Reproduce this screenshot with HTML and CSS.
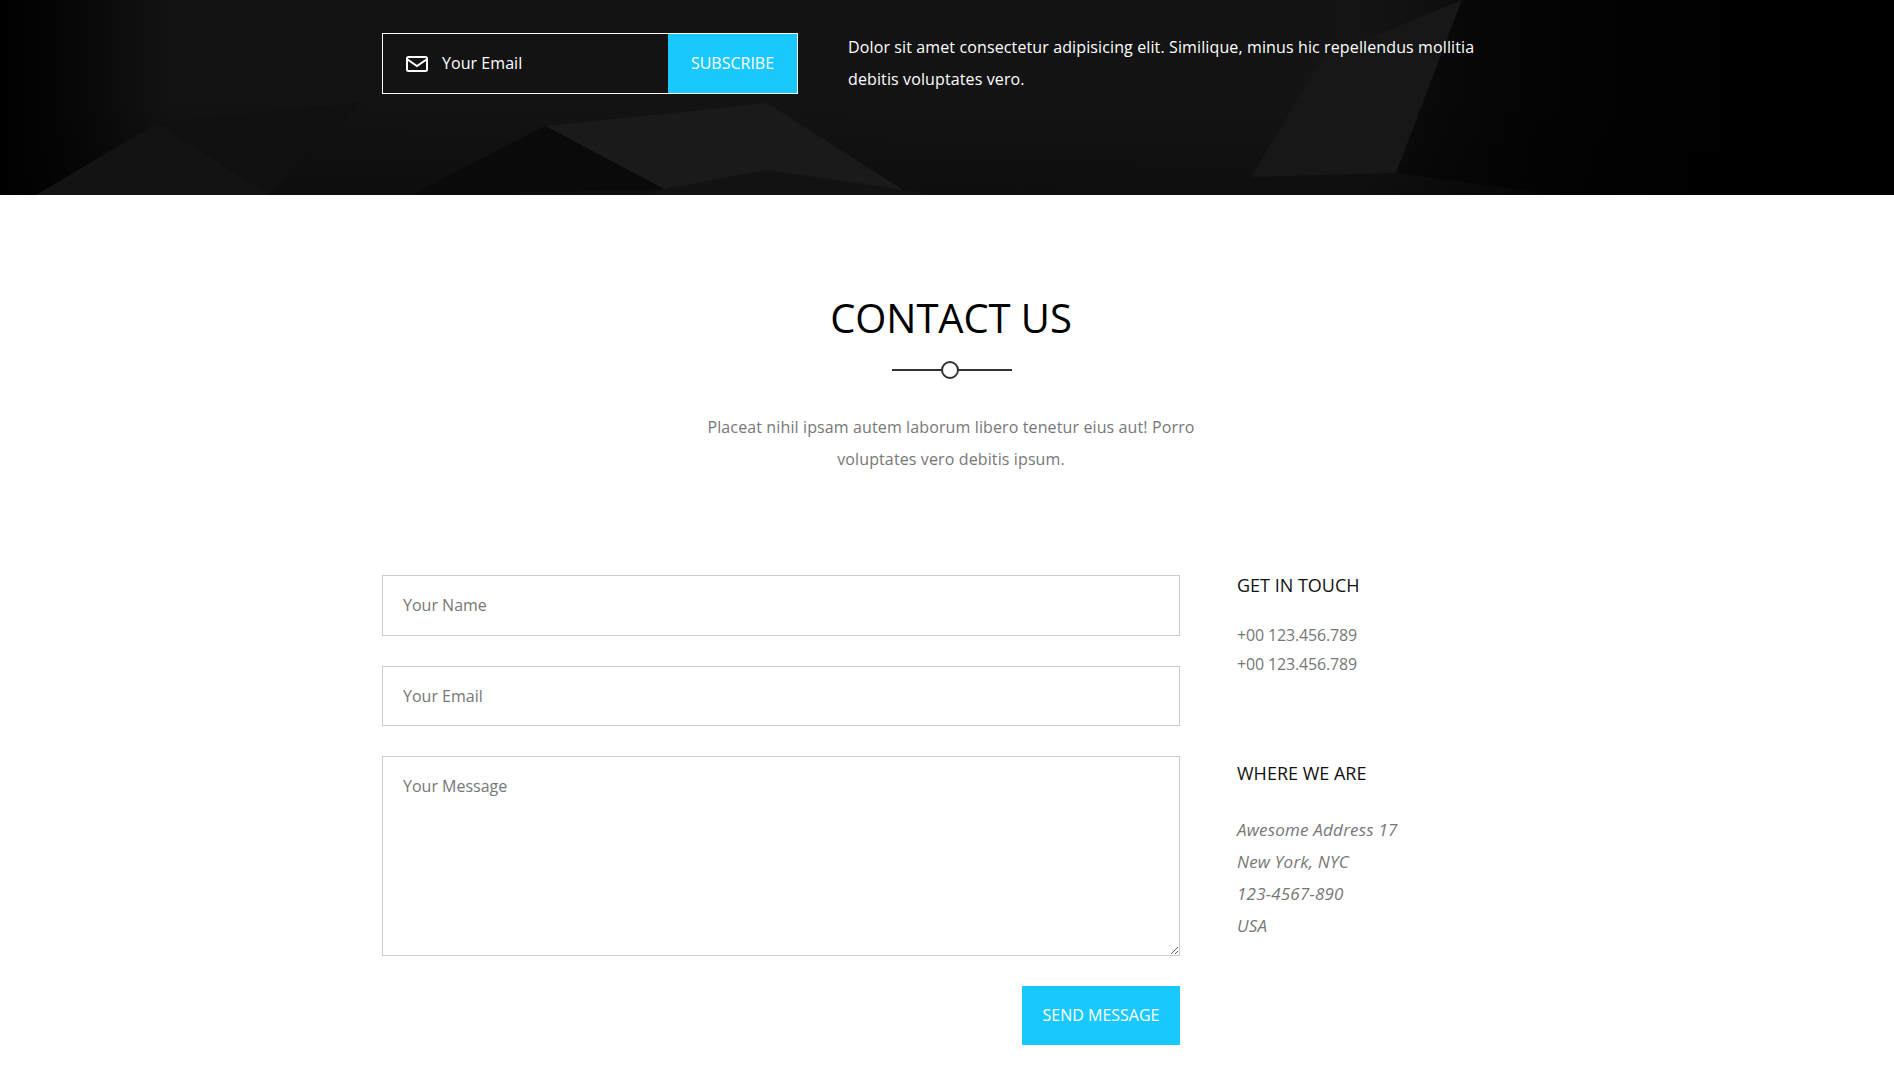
FILE: index.html
```html
<!doctype html>
<html lang="en">
<head>
<meta charset="utf-8">
<meta name="viewport" content="width=device-width,initial-scale=1">
<title>Contact</title>
<link rel="stylesheet" href="styles.css">
</head>
<body>
<section class="newsletter">
  <svg class="newsletter-bg" viewBox="0 0 1894 195" preserveAspectRatio="none" aria-hidden="true">
    <defs>
      <linearGradient id="bgFade" x1="0" x2="1" y1="0" y2="0">
        <stop offset="0" stop-color="#000"/>
        <stop offset=".04" stop-color="#070707"/>
        <stop offset=".09" stop-color="#131313"/>
        <stop offset=".72" stop-color="#141414"/>
        <stop offset=".8" stop-color="#0a0a0a"/>
        <stop offset=".9" stop-color="#030303"/>
        <stop offset=".97" stop-color="#000"/>
      </linearGradient>
      <linearGradient id="bgDown" x1="0" x2="0" y1="0" y2="1">
        <stop offset="0" stop-color="#000" stop-opacity="0"/>
        <stop offset=".5" stop-color="#000" stop-opacity="0"/>
        <stop offset="1" stop-color="#000" stop-opacity=".3"/>
      </linearGradient>
      <linearGradient id="bgRight" x1="0" x2="1" y1="0" y2="0">
        <stop offset="0" stop-color="#000" stop-opacity=".35"/>
        <stop offset=".5" stop-color="#000" stop-opacity=".75"/>
        <stop offset="1" stop-color="#000"/>
      </linearGradient>
    </defs>
    <rect width="1894" height="195" fill="url(#bgFade)"/>
    <rect width="1894" height="195" fill="url(#bgDown)"/>
    <polygon points="36,195 157,123 270,195" fill="#131313"/>
    <polygon points="157,123 364,102 270,195" fill="#101010"/>
    <polygon points="545,126 767,103 903,190 664,189" fill="#1a1a1a"/>
    <polygon points="545,126 412,195 664,189" fill="#0a0a0a"/>
    <polygon points="664,189 767,170 903,190 940,195 640,195" fill="#121212"/>
    <polygon points="1462,0 1396,173 1251,177 1323,57" fill="#171717"/>
    <polygon points="1462,0 1894,0 1894,195 1560,195 1396,173" fill="url(#bgRight)"/>
  </svg>
  <div class="wrap newsletter-row">
    <form class="subscribe">
      <svg class="mail-icon" viewBox="0 0 22 16" aria-hidden="true">
        <rect x="1" y="1" width="20" height="14" rx="1.500"/>
        <path d="M1.500 3.500 11 10l9.500-6.500"/>
      </svg>
      <span class="subscribe-label">Your Email</span>
      <button type="button" class="subscribe-btn">SUBSCRIBE</button>
    </form>
    <p class="newsletter-text">Dolor sit amet consectetur adipisicing elit. Similique, minus hic repellendus mollitia debitis voluptates vero.</p>
  </div>
</section>

<section class="contact">
  <div class="contact-head">
    <h2>CONTACT US</h2>
    <div class="divider"><span></span></div>
    <p>Placeat nihil ipsam autem laborum libero tenetur eius aut! Porro voluptates vero debitis ipsum.</p>
  </div>
  <div class="wrap contact-row">
    <form class="contact-form">
      <input type="text" placeholder="Your Name">
      <input type="text" placeholder="Your Email">
      <textarea placeholder="Your Message"></textarea>
      <button type="button" class="send-btn">SEND MESSAGE</button>
    </form>
    <aside class="contact-info">
      <h4>GET IN TOUCH</h4>
      <div class="phones">
        <div>+00 123.456.789</div>
        <div>+00 123.456.789</div>
      </div>
      <h4 class="where">WHERE WE ARE</h4>
      <address>
        Awesome Address 17<br>
        New York, NYC<br>
        123-4567-890<br>
        USA
      </address>
    </aside>
  </div>
</section>
</body>
</html>
```

FILE: styles.css
```css
:root{--cyan:#19c8ff;--grey:#777;--line:#ccc}
*{box-sizing:border-box}
body{margin:0;background:#fff;color:#000;font-family:"Open Sans",sans-serif;font-size:16px}
.wrap{width:1130px;margin-left:382px}

.newsletter{position:relative;height:195px;padding-top:33px;background:#0c0c0c;overflow:hidden}
.newsletter-bg{position:absolute;left:0;top:0;width:100%;height:100%}
.newsletter-row{position:relative;display:flex;align-items:flex-start}
.subscribe{display:flex;align-items:center;width:416px;height:61px;border:1px solid #fff;padding-left:23px;color:#fff}
.mail-icon{width:22px;height:16px;fill:none;stroke:#fff;stroke-width:2;margin-right:14px}
.subscribe-label{flex:1;padding-bottom:2px;letter-spacing:.05px}
.subscribe-btn{width:129px;height:59px;border:0;padding:0 0 2px;background:var(--cyan);color:#fff;font:inherit}
.newsletter-text{width:650px;margin:-2px 0 0 50px;color:#fff;line-height:32px;letter-spacing:.12px}

.contact{padding-top:98px}
.contact-head{width:520px;margin:0 auto;padding-left:8px;text-align:center}
.contact-head h2{margin:0;font-size:40px;font-weight:400;line-height:50px;letter-spacing:-.1px}
.divider{position:relative;width:120px;height:2px;margin:26px auto 0;left:1px;background:#333}
.divider span{position:absolute;left:50%;top:-8px;width:18px;height:18px;margin-left:-11px;border:2px solid #333;border-radius:50%;background:#fff}
.contact-head p{margin:40px 0 0;color:var(--grey);line-height:32px;letter-spacing:.12px}

.contact-row{display:flex;margin-top:100px}
.contact-form{display:flex;flex-direction:column;width:798px}
.contact-form input,.contact-form textarea{width:100%;border:1px solid var(--line);font:inherit;color:#333;padding:0 20px;background:#fff}
.contact-form input{height:61px;padding-bottom:2px;margin-bottom:30px}
.contact-form input+input{height:60px;padding-bottom:0}
.contact-form textarea{display:block;height:200px;padding-top:16px;line-height:26px;margin-bottom:30px}
.contact-form ::placeholder{color:var(--grey);opacity:1}
.send-btn{align-self:flex-end;width:158px;height:59px;border:0;padding:0 0 2px;background:var(--cyan);color:#fff;font:inherit}

.contact-info{margin-left:57px;color:var(--grey)}
.contact-info h4{margin:0;color:#111;font-size:18px;font-weight:400;line-height:20px}
.phones{margin-top:26px;line-height:29px;letter-spacing:-.15px}
.contact-info .where{margin-top:84px}
address{margin-top:31px;font-size:17px;line-height:32px;font-style:italic;letter-spacing:.2px}
```
